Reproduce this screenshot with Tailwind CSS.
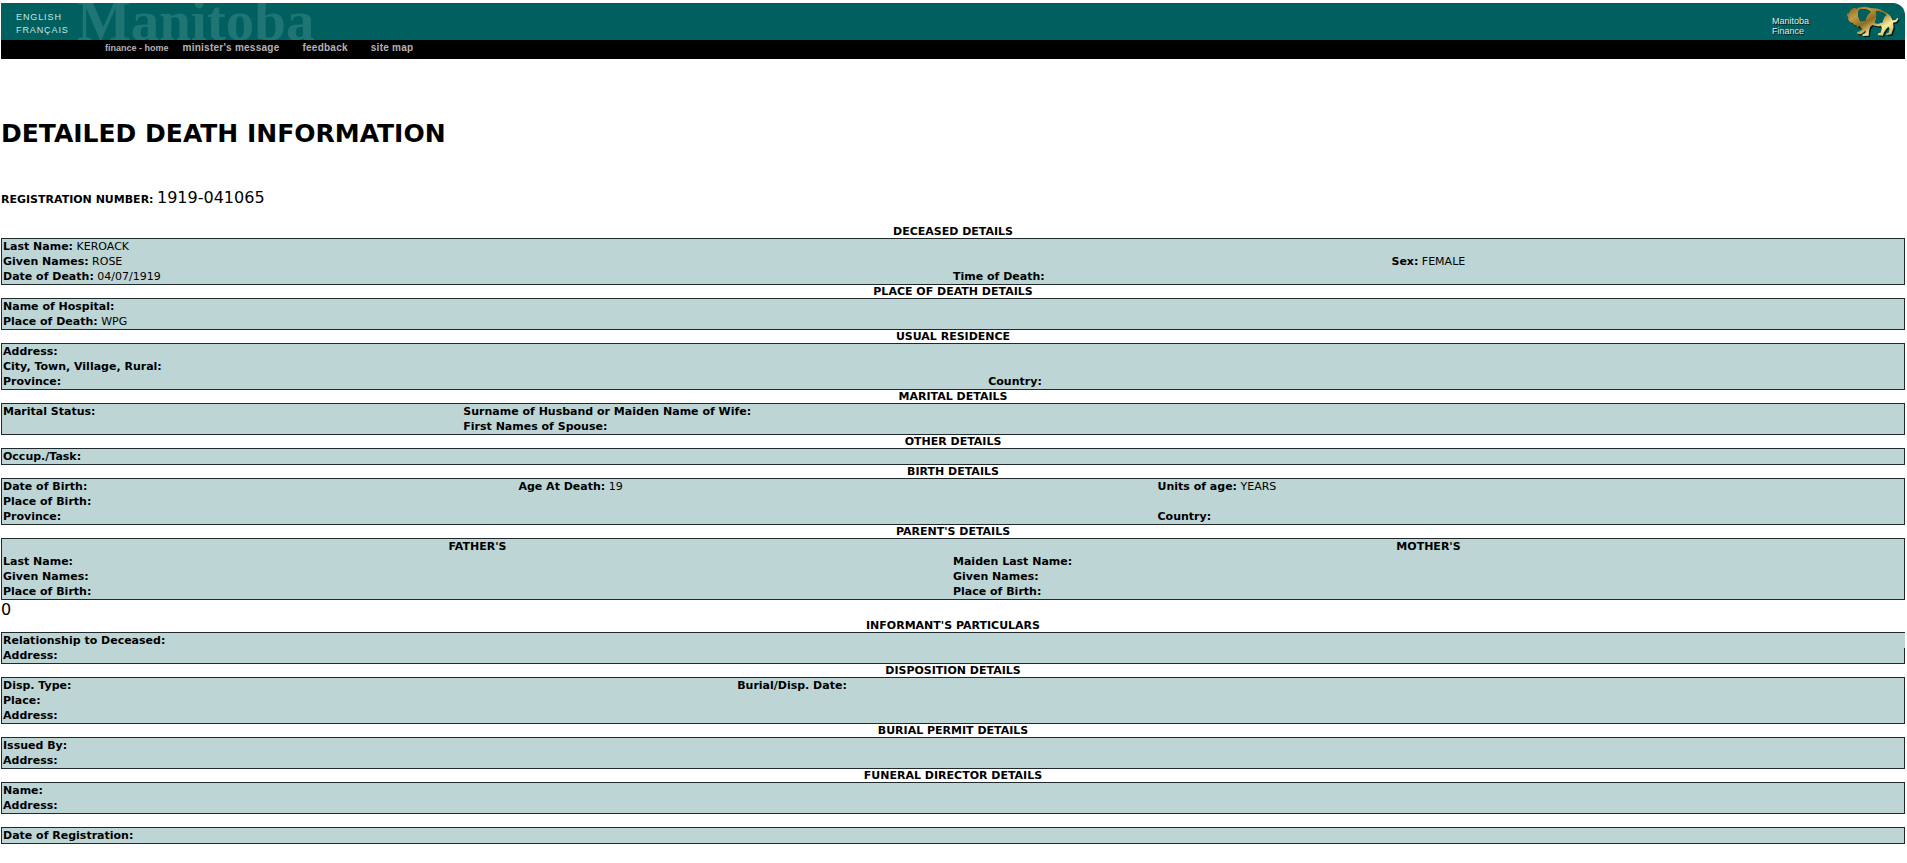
<!DOCTYPE html>
<html lang="en">
<head>
    <meta charset="UTF-8">
    <meta name="viewport" content="width=device-width, initial-scale=1.0">
    <title>Detailed Death Information</title>
    <script src="https://cdn.jsdelivr.net/npm/@tailwindcss/browser@4"></script>
</head>
<body class="bg-white text-black px-px pt-[3px] font-[Verdana,'DejaVu_Sans',sans-serif]">

    <!-- Banner -->
    <header class="mr-px font-['Liberation_Sans',Arial,sans-serif]">
        <div class="relative flex items-start h-[37px] bg-[#006060] rounded-tr-xl overflow-hidden">
            <div class="absolute left-[76px] -top-[9px] text-[57px] leading-[54px] font-bold text-[#1f7474] font-['Liberation_Serif',serif]" aria-hidden="true">Manitoba</div>
            <nav class="relative flex flex-col pl-[15px] pt-[8px] text-[9px] leading-[13px] tracking-widest text-[#c4e6e2]">
                <a href="#">ENGLISH</a>
                <a href="#">FRANÇAIS</a>
            </nav>
            <div class="ml-auto mr-[37px] pt-[13px] text-[9px] leading-[10px] text-[#e0ecec] [text-shadow:1px_1px_0_#001818]">Manitoba<br>Finance</div>
            <!-- Bison -->
            <svg class="mr-[5px] mt-[2px] w-[54px] h-[33px]" viewBox="30 15 162 99" aria-hidden="true">
                <defs>
                    <linearGradient id="gold" x1="0" y1="0" x2="1" y2="1">
                        <stop offset="0" stop-color="#7c5c1c"/>
                        <stop offset=".25" stop-color="#c09a44"/>
                        <stop offset=".45" stop-color="#8f6c22"/>
                        <stop offset=".7" stop-color="#f6ec9a"/>
                        <stop offset="1" stop-color="#c0953c"/>
                    </linearGradient>
                    <path id="bison" fill-rule="evenodd" d="M34 49 L33 40 L38 41 C42 29 50 23 58 24 L61 27 C74 18 90 19 106 25 C124 24 140 30 151 38 C162 44 168 53 170 61 L179 60 L184 53 L187 57 L181 66 L171 68 C172 76 174 82 171 88 L166 103 L152 105 L150 101 L158 98 L161 86 L157 80 L149 89 L143 99 L141 107 L125 105 L128 99 L134 98 L138 83 L134 77 C126 80 117 78 109 75 L102 82 L99 94 L98 107 L80 108 L79 103 L88 99 L89 91 L84 96 L75 103 L64 101 L63 96 L71 94 L80 88 L70 77 L65 83 L61 76 L56 75 L49 69 C41 67 35 59 37 51 Z M70 29 C63 38 67 54 74 64 L88 63 C90 51 96 43 104 36 C98 28 82 24 70 29 Z M119 35 C125 43 122 56 116 68 C124 72 133 71 140 67 C141 57 145 49 151 45 C142 37 130 33 119 35 Z"/>
                </defs>
                <use href="#bison" x="4" y="4" fill="#001c1c"/>
                <use href="#bison" fill="url(#gold)"/>
                <path d="M119 35 C125 43 122 56 116 68 C124 72 133 71 140 67 C141 57 145 49 151 45 C142 37 130 33 119 35 Z M70 29 C63 38 67 54 74 64 L88 63 C90 51 96 43 104 36 C98 28 82 24 70 29 Z" fill="#006060"/>
            </svg>
        </div>
        <nav class="flex h-[19px] pl-[104px] bg-black text-[10px] leading-[16px] font-bold text-[#b4b4b4]">
            <a href="#" class="mr-[14px] text-[9px]">finance - home</a>
            <a href="#" class="mr-[23px] tracking-wide">minister's message</a>
            <a href="#" class="mr-[23px] tracking-wide">feedback</a>
            <a href="#" class="tracking-wide">site map</a>
        </nav>
    </header>

    <main class="mr-px text-[11px] leading-[15px]">
        <h1 class="mt-[60px] text-[25px] leading-[30px] font-bold">DETAILED DEATH INFORMATION</h1>
        <p class="mt-[39px] mb-[16px] leading-[19px]"><b>REGISTRATION NUMBER:</b> <span class="text-[16px]">1919-041065</span></p>

        <h2 class="text-center leading-[13px] font-bold">DECEASED DETAILS</h2>
        <table class="w-full table-fixed border-separate border-spacing-0 border border-[#202a2c] bg-[#bdd5d5]">
            <tr>
                <td class="w-[50%] pl-px"><b>Last Name:</b> KEROACK</td>
                <td class="w-[23%]"></td>
                <td class="w-[27%]"></td>
            </tr>
            <tr>
                <td class="pl-px"><b>Given Names:</b> ROSE</td>
                <td></td>
                <td class="pl-px"><b>Sex:</b> FEMALE</td>
            </tr>
            <tr>
                <td class="pl-px"><b>Date of Death:</b> 04/07/1919</td>
                <td><b>Time of Death:</b></td>
                <td></td>
            </tr>
        </table>

        <h2 class="text-center leading-[13px] font-bold">PLACE OF DEATH DETAILS</h2>
        <table class="w-full table-fixed border-separate border-spacing-0 border border-[#202a2c] bg-[#bdd5d5]">
            <tr><td class="pl-px"><b>Name of Hospital:</b></td></tr>
            <tr><td class="pl-px"><b>Place of Death:</b> WPG</td></tr>
        </table>

        <h2 class="text-center leading-[13px] font-bold">USUAL RESIDENCE</h2>
        <table class="w-full table-fixed border-separate border-spacing-0 border border-[#202a2c] bg-[#bdd5d5]">
            <tr>
                <td class="w-[51.8%] pl-px"><b>Address:</b></td>
                <td></td>
            </tr>
            <tr>
                <td class="pl-px"><b>City, Town, Village, Rural:</b></td>
                <td></td>
            </tr>
            <tr>
                <td class="pl-px"><b>Province:</b></td>
                <td class="pl-px"><b>Country:</b></td>
            </tr>
        </table>

        <h2 class="text-center leading-[13px] font-bold">MARITAL DETAILS</h2>
        <table class="w-full table-fixed border-separate border-spacing-0 border border-[#202a2c] bg-[#bdd5d5]">
            <tr>
                <td class="w-[24.2%] pl-px"><b>Marital Status:</b></td>
                <td class="pl-px"><b>Surname of Husband or Maiden Name of Wife:</b></td>
            </tr>
            <tr>
                <td></td>
                <td class="pl-px"><b>First Names of Spouse:</b></td>
            </tr>
        </table>

        <h2 class="text-center leading-[13px] font-bold">OTHER DETAILS</h2>
        <table class="w-full table-fixed border-separate border-spacing-0 border border-[#202a2c] bg-[#bdd5d5]">
            <tr><td class="pl-px"><b>Occup./Task:</b></td></tr>
        </table>

        <h2 class="text-center leading-[13px] font-bold">BIRTH DETAILS</h2>
        <table class="w-full table-fixed border-separate border-spacing-0 border border-[#202a2c] bg-[#bdd5d5]">
            <tr>
                <td class="w-[27.1%] pl-px"><b>Date of Birth:</b></td>
                <td class="w-[33.6%] pl-px"><b>Age At Death:</b> 19</td>
                <td class="pl-px"><b>Units of age:</b> YEARS</td>
            </tr>
            <tr>
                <td class="pl-px"><b>Place of Birth:</b></td>
                <td></td>
                <td></td>
            </tr>
            <tr>
                <td class="pl-px"><b>Province:</b></td>
                <td></td>
                <td class="pl-px"><b>Country:</b></td>
            </tr>
        </table>

        <h2 class="text-center leading-[13px] font-bold">PARENT'S DETAILS</h2>
        <table class="w-full table-fixed border-separate border-spacing-0 border border-[#202a2c] bg-[#bdd5d5]">
            <tr>
                <th class="w-[50%]">FATHER'S</th>
                <th>MOTHER'S</th>
            </tr>
            <tr>
                <td class="pl-px"><b>Last Name:</b></td>
                <td><b>Maiden Last Name:</b></td>
            </tr>
            <tr>
                <td class="pl-px"><b>Given Names:</b></td>
                <td><b>Given Names:</b></td>
            </tr>
            <tr>
                <td class="pl-px"><b>Place of Birth:</b></td>
                <td><b>Place of Birth:</b></td>
            </tr>
        </table>

        <p class="text-[16px] leading-[19px]">0</p>

        <!-- the first row has no right border -->
        <h2 class="text-center leading-[13px] font-bold">INFORMANT'S PARTICULARS</h2>
        <table class="w-full table-fixed border-separate border-spacing-0 border-y border-l border-[#202a2c] bg-[#bdd5d5]">
            <tr><td class="pl-px"><b>Relationship to Deceased:</b></td></tr>
            <tr><td class="pl-px border-r border-[#202a2c]"><b>Address:</b></td></tr>
        </table>

        <h2 class="text-center leading-[13px] font-bold">DISPOSITION DETAILS</h2>
        <table class="w-full table-fixed border-separate border-spacing-0 border border-[#202a2c] bg-[#bdd5d5]">
            <tr>
                <td class="w-[38.6%] pl-px"><b>Disp. Type:</b></td>
                <td class="pl-px"><b>Burial/Disp. Date:</b></td>
            </tr>
            <tr><td class="pl-px"><b>Place:</b></td><td></td></tr>
            <tr><td class="pl-px"><b>Address:</b></td><td></td></tr>
        </table>

        <h2 class="text-center leading-[13px] font-bold">BURIAL PERMIT DETAILS</h2>
        <table class="w-full table-fixed border-separate border-spacing-0 border border-[#202a2c] bg-[#bdd5d5]">
            <tr><td class="pl-px"><b>Issued By:</b></td></tr>
            <tr><td class="pl-px"><b>Address:</b></td></tr>
        </table>

        <h2 class="text-center leading-[13px] font-bold">FUNERAL DIRECTOR DETAILS</h2>
        <table class="w-full table-fixed border-separate border-spacing-0 border border-[#202a2c] bg-[#bdd5d5]">
            <tr><td class="pl-px"><b>Name:</b></td></tr>
            <tr><td class="pl-px"><b>Address:</b></td></tr>
        </table>

        <table class="mt-[13px] w-full table-fixed border-separate border-spacing-0 border border-[#202a2c] bg-[#bdd5d5]">
            <tr><td class="pl-px"><b>Date of Registration:</b></td></tr>
        </table>
    </main>
</body>
</html>
